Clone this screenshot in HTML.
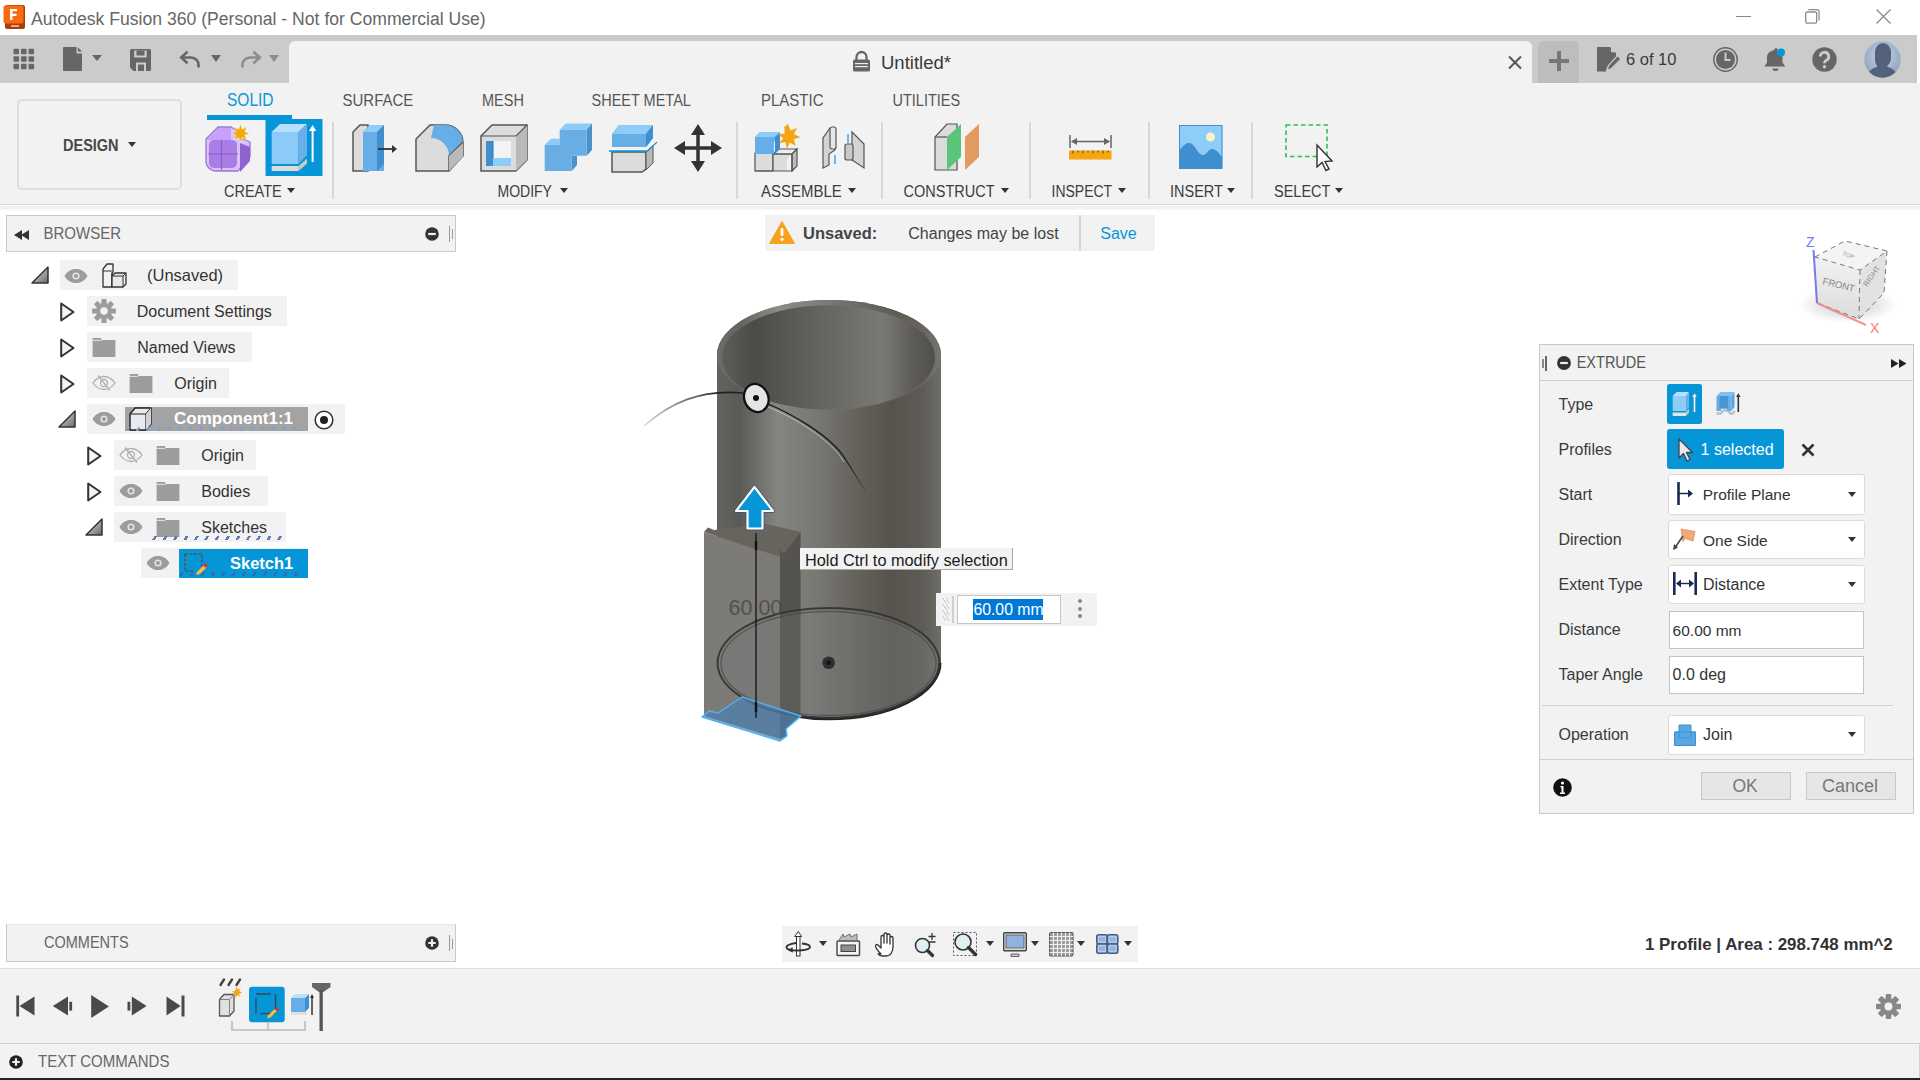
<!DOCTYPE html>
<html><head><meta charset="utf-8">
<style>
*{margin:0;padding:0;box-sizing:border-box}
html,body{width:1920px;height:1080px;overflow:hidden;background:#fff;font-family:"Liberation Sans",sans-serif;position:relative}
.a{position:absolute}
.t{position:absolute;line-height:1;white-space:nowrap;color:#3c3c3c}
svg{position:absolute;overflow:visible}
.u{transform:scaleY(1.13);transform-origin:0 0.85em}
.car{position:absolute;width:0;height:0;border-left:4px solid transparent;border-right:4px solid transparent;border-top:5px solid #333}
</style></head><body>
<!-- TITLE BAR -->
<div class="a" style="left:0;top:0;width:1920px;height:35px;background:#fff"></div>
<div class="t" style="left:31px;top:11px;font-size:17.6px;color:#666">Autodesk Fusion 360 (Personal - Not for Commercial Use)</div>
<!-- TAB STRIP -->
<div class="a" style="left:0;top:35px;width:1917px;height:48px;background:#cbcbcb"></div>
<div class="a" style="left:289px;top:41px;width:1243px;height:42px;background:#f2f2f2;border-radius:6px 6px 0 0"></div>
<div class="a" style="left:1538px;top:41px;width:41px;height:42px;background:#bdbdbd;border-radius:5px 5px 0 0"></div>
<div class="t" style="left:881px;top:54px;font-size:18.5px;color:#3a3a3a">Untitled*</div>
<div class="t" style="left:1626px;top:51px;font-size:16.5px;color:#3a3a3a">6 of 10</div>
<!-- TOOLBAR -->
<div class="a" style="left:0;top:83px;width:1920px;height:122px;background:#f2f2f2;border-bottom:1px solid #dcdcdc"></div>
<div class="a" style="left:0;top:206px;width:1920px;height:4px;background:linear-gradient(#f2f2f2 60%,#fafafa)"></div>
<div class="a" style="left:17px;top:99px;width:165px;height:91px;border:2px solid #dedede;border-radius:5px"></div>
<div class="t u" style="left:63px;top:138.5px;font-size:14.5px;font-weight:bold;color:#484848">DESIGN</div>
<div class="car" style="left:128px;top:142px"></div>
<div class="t u" style="left:227px;top:92.5px;font-size:15.5px;color:#0696d7">SOLID</div>
<div class="a" style="left:207px;top:115px;width:85px;height:5px;background:#0696d7"></div>
<div class="t u" style="left:342.5px;top:93px;font-size:15px;color:#555">SURFACE</div>
<div class="t u" style="left:482px;top:93.5px;font-size:14.5px;color:#555">MESH</div>
<div class="t u" style="left:591.5px;top:93.5px;font-size:14.5px;color:#555">SHEET METAL</div>
<div class="t u" style="left:761px;top:93px;font-size:15px;color:#555">PLASTIC</div>
<div class="t u" style="left:892.5px;top:93.5px;font-size:14.5px;color:#555">UTILITIES</div>
<div class="t u" style="left:224px;top:184.5px;font-size:14.5px">CREATE</div><div class="car" style="left:287px;top:188px"></div>
<div class="t u" style="left:497.5px;top:185px;font-size:14px">MODIFY</div><div class="car" style="left:560px;top:188px"></div>
<div class="t u" style="left:761px;top:184px;font-size:15px">ASSEMBLE</div><div class="car" style="left:848px;top:188px"></div>
<div class="t u" style="left:903.5px;top:184.5px;font-size:14.5px">CONSTRUCT</div><div class="car" style="left:1001px;top:188px"></div>
<div class="t u" style="left:1051.5px;top:185px;font-size:14px">INSPECT</div><div class="car" style="left:1118px;top:188px"></div>
<div class="t u" style="left:1170px;top:184.5px;font-size:14.5px">INSERT</div><div class="car" style="left:1227px;top:188px"></div>
<div class="t u" style="left:1274px;top:184.5px;font-size:14.5px">SELECT</div><div class="car" style="left:1335px;top:188px"></div>
<div class="a" style="left:332px;top:122px;width:2px;height:77px;background:#d8d8d8"></div>
<div class="a" style="left:736px;top:122px;width:2px;height:77px;background:#d8d8d8"></div>
<div class="a" style="left:881px;top:122px;width:2px;height:77px;background:#d8d8d8"></div>
<div class="a" style="left:1029px;top:122px;width:2px;height:77px;background:#d8d8d8"></div>
<div class="a" style="left:1148px;top:122px;width:2px;height:77px;background:#d8d8d8"></div>
<div class="a" style="left:1251px;top:122px;width:2px;height:77px;background:#d8d8d8"></div>
<!-- app logo -->
<svg style="left:3px;top:5px" width="23" height="25" viewBox="0 0 23 25">
<rect x="2" y="0" width="20" height="24" rx="2" fill="#a83d10"/>
<rect x="0.5" y="0.5" width="20" height="18" rx="2" fill="#f96a0f"/>
<path d="M7 4h7v2.3H9.5v2.4h4v2.2h-4V15H7z" fill="#fff"/>
<rect x="8" y="20" width="8" height="2" fill="#f4a07a"/>
</svg>
<!-- window controls -->
<div class="a" style="left:1736px;top:16px;width:15px;height:1px;background:#8a8a8a"></div>
<svg style="left:1805px;top:9px" width="15" height="15" viewBox="0 0 15 15"><rect x="0.7" y="3" width="11" height="11.2" rx="1.6" fill="none" stroke="#8a8a8a" stroke-width="1.3"/><path d="M3.3 0.7h8.5a2.3 2.3 0 0 1 2.3 2.3v8.4" fill="none" stroke="#8a8a8a" stroke-width="1.2"/></svg>
<svg style="left:1876px;top:9px" width="15" height="15" viewBox="0 0 15 15"><path d="M0.5 0.5L14.5 14.5M14.5 0.5L0.5 14.5" stroke="#8a8a8a" stroke-width="1.3"/></svg>
<!-- tab strip left icons -->
<svg style="left:13px;top:48px" width="23" height="22" viewBox="0 0 23 22" fill="#666">
<rect x="0.5" y="0.7" width="5.6" height="5.6" rx="1"/><rect x="8" y="0.7" width="5.6" height="5.6" rx="1"/><rect x="15.5" y="0.7" width="5.6" height="5.6" rx="1"/>
<rect x="0.5" y="8.2" width="5.6" height="5.6" rx="1"/><rect x="8" y="8.2" width="5.6" height="5.6" rx="1"/><rect x="15.5" y="8.2" width="5.6" height="5.6" rx="1"/>
<rect x="0.5" y="15.7" width="5.6" height="5.6" rx="1"/><rect x="8" y="15.7" width="5.6" height="5.6" rx="1"/><rect x="15.5" y="15.7" width="5.6" height="5.6" rx="1"/>
</svg>
<svg style="left:63px;top:47px" width="20" height="25" viewBox="0 0 20 25" fill="#666"><path d="M1 0h12.5v6.5H19V23a1 1 0 0 1-1 1H1a1 1 0 0 1-1-1V1a1 1 0 0 1 1-1z M14.8 0.3L19 4.6H14.8z"/></svg>
<div class="car" style="left:91.5px;top:55px;border-left-width:5px;border-right-width:5px;border-top:6.5px solid #666"></div>
<svg style="left:130px;top:48.5px" width="22" height="22" viewBox="0 0 22 22" fill="#666"><path d="M1.5 0h18a1.5 1.5 0 0 1 1.5 1.5v19a1.5 1.5 0 0 1-1.5 1.5H3.5L0 18.5V1.5A1.5 1.5 0 0 1 1.5 0z"/><rect x="4.2" y="1.5" width="12.5" height="7" fill="#cbcbcb"/><rect x="6.5" y="1.5" width="8" height="5" fill="#666"/><rect x="6" y="13.5" width="10" height="8.5" fill="#cbcbcb"/><rect x="8" y="15.5" width="6" height="6.5" fill="#666"/></svg>
<svg style="left:180px;top:51px" width="21" height="17" viewBox="0 0 21 17"><path d="M2 6.5h9a7.5 7.5 0 0 1 7.5 7.5v2.5" fill="none" stroke="#666" stroke-width="2.6"/><path d="M7.5 0.8L1.2 6.5L7.5 12.2" fill="none" stroke="#666" stroke-width="2.6"/></svg>
<div class="car" style="left:210.5px;top:54.5px;border-left-width:5px;border-right-width:5px;border-top:7px solid #666"></div>
<svg style="left:240px;top:51px" width="21" height="17" viewBox="0 0 21 17"><path d="M19 6.5h-9a7.5 7.5 0 0 0-7.5 7.5v2.5" fill="none" stroke="#8c8c8c" stroke-width="2.6"/><path d="M13.5 0.8L19.8 6.5L13.5 12.2" fill="none" stroke="#8c8c8c" stroke-width="2.6"/></svg>
<div class="car" style="left:268.5px;top:54.5px;border-left-width:5px;border-right-width:5px;border-top:7px solid #8c8c8c"></div>
<!-- lock -->
<svg style="left:852px;top:51px" width="19" height="21" viewBox="0 0 19 21"><path d="M4.5 9V6a5 5 0 0 1 10 0v3" fill="none" stroke="#666" stroke-width="2.3"/><rect x="1" y="8.5" width="17" height="12" rx="1.5" fill="#666"/><rect x="3" y="12" width="13" height="1.2" fill="#eee"/><rect x="3" y="15" width="13" height="1.2" fill="#eee"/></svg>
<!-- tab close -->
<svg style="left:1508px;top:55.5px" width="14" height="13" viewBox="0 0 14 13"><path d="M1 0.5L13 12.5M13 0.5L1 12.5" stroke="#555" stroke-width="2"/></svg>
<!-- plus -->
<svg style="left:1549px;top:51px" width="20" height="20" viewBox="0 0 20 20"><path d="M10 0V20M0 10H20" stroke="#777" stroke-width="4"/></svg>
<!-- doc edit -->
<svg style="left:1597px;top:47px" width="26" height="25" viewBox="0 0 26 25" fill="#666"><path d="M0 0h13l6 6v5l-9 9-1 4.5H0z"/><path d="M14 0.3l5 5h-5z" fill="#cbcbcb"/><path d="M20.5 8.5l3.5 3.5-9.5 9.5-4.5 1.5 1.5-4.5z" stroke="#cbcbcb" stroke-width="1.2"/></svg>
<!-- clock -->
<svg style="left:1712.5px;top:46.8px" width="25" height="25" viewBox="0 0 25 25"><circle cx="12.5" cy="12.5" r="11.7" fill="none" stroke="#666" stroke-width="1.5"/><circle cx="12.5" cy="12.5" r="9.5" fill="#666"/><path d="M12.5 5.5v7.5h5" fill="none" stroke="#cbcbcb" stroke-width="2"/></svg>
<!-- bell -->
<svg style="left:1764px;top:48px" width="24" height="24" viewBox="0 0 24 24"><path d="M10.5 1.5a1.5 1.5 0 0 1 3 0v1.5a6.5 6.5 0 0 1 5 6.5v5l2.7 4H0.3l2.7-4v-5a6.5 6.5 0 0 1 5-6.5z" fill="#666"/><path d="M8.5 20.5a3 2.5 0 0 0 6 0z" fill="#666"/><circle cx="17" cy="4.5" r="4" fill="#0696d7"/></svg>
<!-- help -->
<svg style="left:1811.5px;top:46.8px" width="25" height="25" viewBox="0 0 25 25"><circle cx="12.5" cy="12.5" r="12.2" fill="#666"/><path d="M8.3 9.5a4.2 4.2 0 1 1 6 3.8c-1.3.7-1.8 1.4-1.8 2.9" fill="none" stroke="#cbcbcb" stroke-width="2.8"/><circle cx="12.5" cy="19.7" r="1.7" fill="#cbcbcb"/></svg>
<!-- avatar -->
<svg style="left:1864px;top:41px" width="37" height="37" viewBox="0 0 37 37"><defs><radialGradient id="av" cx="0.5" cy="0.4" r="0.6"><stop offset="0" stop-color="#c9d4e2"/><stop offset="1" stop-color="#8da3bf"/></radialGradient><clipPath id="avc"><circle cx="18.5" cy="18.5" r="18.2"/></clipPath></defs><circle cx="18.5" cy="18.5" r="18.2" fill="url(#av)"/><g clip-path="url(#avc)" fill="#53627a"><path d="M11 11a8 9 0 0 1 16 0v6c0 3-1.5 6-3.5 7.5v1.5c4 1 9 3 10 11H3c1-8 6-10 10-11v-1.5C11 23 11 20 11 17z"/></g></svg>
<!-- TOOLBAR ICONS -->
<!-- create form -->
<svg style="left:200px;top:115px" width="130" height="65" viewBox="0 0 130 65">
<path d="M18 12h13l5 3v6l14 6v15l-12 14H16a10 10 0 0 1-10-10V24z" fill="#d9c2f9" stroke="#9c74d8" stroke-width="1.3" stroke-linejoin="round"/>
<path d="M7 25l11-12h13v12z" fill="#c7a0fa"/>
<rect x="9" y="25" width="28" height="28" rx="5" fill="#a97de6"/>
<path d="M21.5 25v30M8 39h30" stroke="#8a5cc8" stroke-width="1.2"/>
<path d="M40 28l10 4v14l-10 11z" fill="#8f62d2"/>
<path d="M40.5 9l1.7 5.2 4.9-2.4-2.4 4.9 5.2 1.7-5.2 1.7 2.4 4.9-4.9-2.4-1.7 5.2-1.7-5.2-4.9 2.4 2.4-4.9-5.2-1.7 5.2-1.7-2.4-4.9 4.9 2.4z" fill="#f5a800" stroke="#f3f3f3" stroke-width="0.6"/>
<rect x="65.5" y="4" width="57" height="57" fill="#0696d7"/>
<path d="M71.7 51h27v5h-27z" fill="#dadada"/><path d="M98.7 56l8.3-7.5v-5l-8.3 7.5z" fill="#c8c8c8"/>
<path d="M71.7 17l8.3-8h27l-8.5 8z" fill="#b6e0fc"/>
<path d="M71.7 17h26.8v32H71.7z" fill="#8ccbf8"/>
<path d="M98.5 17l8.5-8v31l-8.5 9z" fill="#68b0e6"/>
<path d="M112.6 47V12" stroke="#fff" stroke-width="2"/><path d="M109 16l3.6-6 3.6 6z" fill="#fff"/>
</svg>
<!-- press pull -->
<svg style="left:352px;top:124px" width="46" height="48" viewBox="0 0 46 48">
<path d="M1 8L8 1h8v46H1z" fill="#dcdcdc" stroke="#555" stroke-width="1.5"/>
<path d="M11 47V8l7-7h14v46z" fill="#66aee5"/><path d="M11 8l7-7h14l-7 7z" fill="#8ecdf7"/><path d="M25 8l7-7v39l-7 7z" fill="#3f8fd0"/><path d="M11 8h14v39H11z" fill="#66aee5"/>
<path d="M26 25h16" stroke="#333" stroke-width="1.8"/><path d="M40 21l5 4-5 4z" fill="#333"/>
</svg>
<!-- fillet -->
<svg style="left:415px;top:124px" width="49" height="48" viewBox="0 0 49 48">
<path d="M1 47V15L15 1h15a18 18 0 0 1 18 18v13l-14 15z" fill="#dcdcdc" stroke="#555" stroke-width="1.5"/>
<path d="M19 1h11a18 18 0 0 1 18 18v3l-14 10a18 18 0 0 0-18-18z" fill="#66aee5"/>
<path d="M34 47V32l14-14" fill="none" stroke="#555" stroke-width="1.5"/><path d="M34 32l14-13v14l-14 14z" fill="#b9b9b9"/>
</svg>
<!-- shell -->
<svg style="left:480px;top:124px" width="48" height="48" viewBox="0 0 48 48">
<path d="M1 47V12L12 1h35v35L36 47z" fill="#dcdcdc" stroke="#555" stroke-width="1.5"/>
<path d="M36 47V12l11-11v35z" fill="#b9b9b9"/><path d="M1 12h35L47 1" fill="none" stroke="#555" stroke-width="1.2"/>
<rect x="6" y="17" width="25" height="25" fill="#f3f3f3"/>
<path d="M6 17h7v17h18v8H6z" fill="#3f8fd0"/><path d="M13 34h18v8H13z" fill="#8ecdf7"/><path d="M13 17v17" stroke="#2d76b5"/>
</svg>
<!-- combine -->
<svg style="left:540px;top:118px" width="60" height="60" viewBox="0 0 60 60">
<path d="M19.7 11.7l6.1-6.1H52l-5.3 6.1z" fill="#8ccbf8"/>
<path d="M46.7 11.7L52 5.6V32l-5.3 5.8z" fill="#4893cd"/>
<path d="M4.7 26.7l6.1-5.9h8.9v5.9z" fill="#8ccbf8"/>
<path d="M31.7 37.8H37V47l-5.3 6z" fill="#4893cd"/>
<path d="M19.7 11.7h27v26.1H31.7V53h-27V26.7h15z" fill="#69ade5"/>
</svg>
<!-- split -->
<svg style="left:609px;top:124px" width="48" height="48" viewBox="0 0 48 48">
<path d="M3 45V28h34v17l-4 3H3z" fill="#dcdcdc" stroke="#555" stroke-width="1.5"/><path d="M37 28l7-6v17l-7 7z" fill="#b9b9b9" stroke="#555" stroke-width="1"/>
<path d="M3 10l7-9h34v13l-7 9H3z" fill="#66aee5"/><path d="M3 10l7-9h34l-7 9z" fill="#8ecdf7"/><path d="M37 10l7-9v13l-7 9z" fill="#3f8fd0"/>
<path d="M0 27h38l10-9" fill="none" stroke="#0696d7" stroke-width="1.3"/><path d="M0 25.5h38l10-9" fill="none" stroke="#fff" stroke-width="1"/>
</svg>
<!-- move -->
<svg style="left:674px;top:124px" width="48" height="48" viewBox="0 0 48 48" fill="#333">
<path d="M23 7v34h2V7zM7 23h34v2H7z" stroke="#333" stroke-width="1.5"/>
<path d="M24 0l-7 11h14zM24 48l-7-11h14zM0 24l11-7v14zM48 24l-11-7v14z"/>
</svg>
<!-- new component -->
<svg style="left:754px;top:124px" width="48" height="48" viewBox="0 0 48 48">
<path d="M1 47V29h23l-5 2V47z" fill="#dcdcdc" stroke="#555" stroke-width="1.2"/>
<path d="M19 47V30h19l-5 5V47z" fill="#dcdcdc"/><path d="M19 30l5-5h19l-5 5z" fill="#eee" stroke="#555" stroke-width="1.2"/><path d="M38 30l5-5v17l-5 5z" fill="#bdbdbd" stroke="#555" stroke-width="1.2"/><path d="M1 47h37V30H19M19 30v17" fill="none" stroke="#555" stroke-width="1.2"/>
<path d="M1 30V13l5-5h19v5l-5 5v12z" fill="#66aee5"/><path d="M1 13l5-5h20l-5 5z" fill="#8ecdf7"/><path d="M21 13l5-5v17l-5 5z" fill="#3f8fd0"/>
<path d="M34 0l2.5 6.5 6.5-2.5-3 6.2 6.5 3-6.7 2 2 6.8-6-3.5-3 6.2-1.3-6.7-6.8 1.5 4.6-5.2-5.5-4 6.9-0.5-0.5-6.9z" fill="#f5a511"/>
</svg>
<!-- joint -->
<svg style="left:822px;top:126px" width="43" height="43" viewBox="0 0 43 43">
<path d="M1 39V12L8 2h5v22l-6 4v11l-6 3z" fill="#d4d4d4" stroke="#555" stroke-width="1.2"/>
<rect x="8" y="1" width="6" height="22" rx="2" fill="#e6e6e6" stroke="#555" stroke-width="1.2"/>
<path d="M30 6l12 12v24L30 34z" fill="#d4d4d4" stroke="#555" stroke-width="1.2"/><rect x="23" y="18" width="8" height="16" rx="2" fill="#c9c9c9" stroke="#555" stroke-width="1.2"/>
<path d="M13 29v9M26 8v9" stroke="#1e90e0" stroke-width="1.2"/>
</svg>
<!-- construct -->
<svg style="left:934px;top:123px" width="47" height="48" viewBox="0 0 47 48">
<path d="M1 47V14L13 1h10v46z" fill="#dcdcdc" stroke="#555" stroke-width="1.2"/>
<path d="M13 47V14L27 1v33z" fill="#5bc47b"/><path d="M1 14h12" stroke="#555" stroke-width="1.2"/>
<path d="M31 47V14L45 1v33z" fill="#e29a61"/>
</svg>
<!-- measure -->
<svg style="left:1069px;top:135px" width="43" height="26" viewBox="0 0 43 26">
<path d="M1 0v13M42 0v13" stroke="#666" stroke-width="1.5"/><path d="M3 6.5h37" stroke="#666" stroke-width="1.5"/><path d="M2 6.5l6-3.5v7zM41 6.5l-6-3.5v7z" fill="#666"/>
<rect x="0" y="15.5" width="42.5" height="9" fill="#f5a511"/>
<path d="M4 15.5v3M9 15.5v2M14 15.5v3M19 15.5v2M24 15.5v3M29 15.5v2M34 15.5v3M39 15.5v2" stroke="#6a4a00" stroke-width="1"/>
</svg>
<!-- insert image -->
<svg style="left:1179px;top:125px" width="44" height="44" viewBox="0 0 44 44">
<rect x="0" y="0" width="43.5" height="43.5" fill="#8ecdf7"/>
<circle cx="31.5" cy="12" r="4.5" fill="#f7f5c8"/>
<path d="M0 26c6-8 10-10 14-6 4 4 6 10 10 10 4 0 5-6 9-6 5 0 8 6 10 8v12H0z" fill="#3f8fd0"/>
<rect x="0.5" y="0.5" width="42.5" height="42.5" fill="none" stroke="#3f8fd0" stroke-width="1"/>
</svg>
<!-- select -->
<svg style="left:1285px;top:124px" width="50" height="48" viewBox="0 0 50 48">
<rect x="1" y="1" width="41" height="31.5" fill="none" stroke="#2fbf55" stroke-width="1.6" stroke-dasharray="4.5 3"/>
<path d="M32 21v22l5-4.5 4 8 3-1.5-4-7.5 7-0.5z" fill="#fff" stroke="#333" stroke-width="1.4"/>
</svg>

<!-- BROWSER -->
<svg style="left:0;top:0;width:0;height:0"><defs>
<symbol id="eye" viewBox="0 0 24 14"><path d="M0.5 7C4 1.5 8 0 12 0s8 1.5 11.5 7C20 12.5 16 14 12 14S4 12.5 0.5 7z" fill="#9c9c9c"/><circle cx="12" cy="7" r="3.6" fill="#e4e4e4"/><circle cx="12" cy="7" r="2" fill="#9c9c9c"/></symbol>
<symbol id="eyeh" viewBox="0 0 24 16"><path d="M1 8C4.5 3 8 1.5 12 1.5S19.5 3 23 8C19.5 13 16 14.5 12 14.5S4.5 13 1 8z" fill="none" stroke="#b0b0b0" stroke-width="1.3"/><circle cx="12" cy="8" r="3.5" fill="none" stroke="#b0b0b0" stroke-width="1.3"/><path d="M6 0.5L18 15.5" stroke="#b0b0b0" stroke-width="1.3"/></symbol>
<symbol id="fold" viewBox="0 0 24 20"><path d="M0 0h9v2H0z" fill="#9c9c9c"/><path d="M0 3h8l2-1h14v18H0z" fill="#9c9c9c"/></symbol>
<symbol id="tri" viewBox="0 0 15 20"><path d="M1.2 1.5L13.5 10L1.2 18.5z" fill="#f4f4f4" stroke="#333" stroke-width="2" stroke-linejoin="round"/></symbol>
<symbol id="trif" viewBox="0 0 18 18"><defs><linearGradient id="tg" x1="0" y1="0" x2="1" y2="1"><stop offset="0" stop-color="#eee"/><stop offset="1" stop-color="#666"/></linearGradient></defs><path d="M1 17L17 1V17z" fill="url(#tg)" stroke="#333" stroke-width="1.5" stroke-linejoin="round"/></symbol>
</defs></svg>
<div class="a" style="left:6px;top:215px;width:450px;height:37px;background:#f2f2f2;border:1px solid #c9c9c9"></div>
<svg style="left:13.5px;top:230px" width="16" height="10" viewBox="0 0 16 10" fill="#333"><path d="M0 5L8 0v10zM7 5l8-5v10z"/></svg>
<div class="t u" style="left:43.5px;top:226.3px;font-size:15px;color:#666">BROWSER</div>
<svg style="left:424.5px;top:226.8px" width="14" height="14" viewBox="0 0 14 14"><circle cx="7" cy="7" r="6.8" fill="#333"/><rect x="3.2" y="5.9" width="7.6" height="2.2" fill="#f2f2f2"/></svg>
<div class="a" style="left:448.5px;top:225.5px;width:1.5px;height:16px;background:#999"></div>
<div class="a" style="left:451.5px;top:229px;width:1.5px;height:10px;background:#999"></div>

<!-- row backgrounds -->
<div class="a" style="left:60px;top:260px;width:178px;height:30px;background:#f2f2f2"></div>
<div class="a" style="left:87px;top:296px;width:200px;height:30px;background:#f2f2f2"></div>
<div class="a" style="left:87px;top:332px;width:165px;height:30px;background:#f2f2f2"></div>
<div class="a" style="left:87px;top:368px;width:142px;height:30px;background:#f2f2f2"></div>
<div class="a" style="left:87px;top:404px;width:258px;height:30px;background:#f2f2f2"></div>
<div class="a" style="left:114px;top:440px;width:142px;height:30px;background:#f2f2f2"></div>
<div class="a" style="left:114px;top:476px;width:154px;height:30px;background:#f2f2f2"></div>
<div class="a" style="left:114px;top:512px;width:172px;height:30px;background:#f2f2f2"></div>
<div class="a" style="left:141px;top:548px;width:166px;height:30px;background:#f2f2f2"></div>
<div class="a" style="left:124.5px;top:407px;width:183px;height:24px;background:#a3a3a3"></div>
<div class="a" style="left:178.5px;top:548.5px;width:129px;height:29.5px;background:#0696d7"></div>

<!-- triangles -->
<svg style="left:31px;top:266px" width="18" height="18"><use href="#trif"/></svg>
<svg style="left:60px;top:302px" width="15" height="20"><use href="#tri"/></svg>
<svg style="left:60px;top:338px" width="15" height="20"><use href="#tri"/></svg>
<svg style="left:60px;top:374px" width="15" height="20"><use href="#tri"/></svg>
<svg style="left:57.5px;top:410px" width="18" height="18"><use href="#trif"/></svg>
<svg style="left:86.5px;top:446px" width="15" height="20"><use href="#tri"/></svg>
<svg style="left:86.5px;top:482px" width="15" height="20"><use href="#tri"/></svg>
<svg style="left:84.5px;top:518px" width="18" height="18"><use href="#trif"/></svg>

<!-- eyes -->
<svg style="left:64px;top:268.5px" width="24" height="14"><use href="#eye"/></svg>
<svg style="left:91.5px;top:375px" width="24" height="16"><use href="#eyeh"/></svg>
<svg style="left:91.5px;top:412px" width="24" height="14"><use href="#eye"/></svg>
<svg style="left:118.5px;top:447px" width="24" height="16"><use href="#eyeh"/></svg>
<svg style="left:118.5px;top:484px" width="24" height="14"><use href="#eye"/></svg>
<svg style="left:118.5px;top:520px" width="24" height="14"><use href="#eye"/></svg>
<svg style="left:145.5px;top:556px" width="24" height="14"><use href="#eye"/></svg>

<!-- folders -->
<svg style="left:91.5px;top:338px" width="24" height="19"><use href="#fold"/></svg>
<svg style="left:129px;top:374px" width="24" height="19"><use href="#fold"/></svg>
<svg style="left:155.5px;top:446px" width="24" height="19"><use href="#fold"/></svg>
<svg style="left:155.5px;top:482px" width="24" height="19"><use href="#fold"/></svg>
<svg style="left:155.5px;top:518px" width="24" height="19"><use href="#fold"/></svg>

<!-- gear -->
<svg style="left:91.5px;top:299px" width="24" height="24" viewBox="0 0 24 24"><g fill="#9c9c9c" transform="translate(12 12)"><circle r="8"/><g id="gt"><rect x="-2.6" y="-12" width="5.2" height="6" rx="1"/></g><use href="#gt" transform="rotate(45)"/><use href="#gt" transform="rotate(90)"/><use href="#gt" transform="rotate(135)"/><use href="#gt" transform="rotate(180)"/><use href="#gt" transform="rotate(225)"/><use href="#gt" transform="rotate(270)"/><use href="#gt" transform="rotate(315)"/></g><circle cx="12" cy="12" r="3.8" fill="#f2f2f2"/></svg>

<!-- unsaved component icon -->
<svg style="left:102px;top:262.5px" width="25" height="25" viewBox="0 0 25 25"><path d="M1 24V6l4-5h6v8l-1 1v14z" fill="#f2f2f2" stroke="#333" stroke-width="1.3" stroke-linejoin="round"/><path d="M1 8h9M10 10v14" stroke="#333" stroke-width="1" fill="none"/><path d="M10 24V13l3-3h11v11l-3 3z" fill="#e9e9e9" stroke="#333" stroke-width="1.3" stroke-linejoin="round"/><path d="M10 13h11l3-3M21 13v11" stroke="#333" stroke-width="1" fill="none"/></svg>
<!-- component cube icon -->
<svg style="left:129px;top:407px" width="24" height="24" viewBox="0 0 24 24"><path d="M1 23V7l5-6h16v16l-5 6z" fill="#e8eaf0" stroke="#222" stroke-width="1.4" stroke-linejoin="round"/><path d="M1 7h16l5-6M17 7v16" fill="none" stroke="#222" stroke-width="1.2"/><path d="M17 7l5-6v16l-5 6z" fill="#cfd2da"/></svg>
<!-- radio -->
<svg style="left:313.5px;top:410px" width="20" height="20" viewBox="0 0 20 20"><circle cx="10" cy="10" r="8.8" fill="#fff" stroke="#333" stroke-width="1.6"/><circle cx="10" cy="10" r="4" fill="#222"/></svg>
<!-- sketch icon -->
<svg style="left:184px;top:553px" width="24" height="21" viewBox="0 0 24 21"><path d="M1 1h17v14" fill="none" stroke="#555" stroke-width="1.6" stroke-dasharray="3 1.5"/><path d="M1 1v17h8" fill="none" stroke="#555" stroke-width="1.6" stroke-dasharray="3 1.5"/><path d="M13 19l7-7 3 2-7 7-4 1z" fill="#f0c040"/><circle cx="21.5" cy="12.5" r="2" fill="#e03030"/></svg>

<!-- dashed underlines -->
<div class="a" style="left:124px;top:426.5px;width:180px;height:4px;background:repeating-linear-gradient(120deg,transparent 0 3px,#7f9fcf 3px 5.5px,transparent 5.5px 9px);opacity:.9"></div>
<div class="a" style="left:151px;top:535.5px;width:132px;height:4px;background:repeating-linear-gradient(120deg,transparent 0 3px,#5b7fb5 3px 5.5px,transparent 5.5px 9px)"></div>
<div class="a" style="left:178px;top:571.5px;width:124px;height:4px;background:repeating-linear-gradient(120deg,transparent 0 3px,#2d6fb0 3px 5.5px,transparent 5.5px 9px)"></div>

<!-- texts -->
<div class="t" style="left:147px;top:266.8px;font-size:16.5px;color:#333">(Unsaved)</div>
<div class="t" style="left:136.7px;top:303.5px;font-size:16px;color:#333">Document Settings</div>
<div class="t" style="left:137.2px;top:339.5px;font-size:16px;color:#333">Named Views</div>
<div class="t" style="left:174.2px;top:375.5px;font-size:16px;color:#333">Origin</div>
<div class="t" style="left:174px;top:410.4px;font-size:17px;color:#fff;font-weight:bold">Component1:1</div>
<div class="t" style="left:201.3px;top:447.5px;font-size:16px;color:#333">Origin</div>
<div class="t" style="left:201.3px;top:483.5px;font-size:16px;color:#333">Bodies</div>
<div class="t" style="left:201.3px;top:519.5px;font-size:16px;color:#333">Sketches</div>
<div class="t" style="left:230px;top:555px;font-size:16.5px;color:#fff;font-weight:bold">Sketch1</div>
<!-- UNSAVED BANNER -->
<div class="a" style="left:765px;top:215px;width:390px;height:35.5px;background:#f2f2f2"></div>
<div class="a" style="left:1079px;top:215px;width:2px;height:35.5px;background:#d6d6d6"></div>
<svg style="left:769px;top:221px" width="26" height="23" viewBox="0 0 26 23"><path d="M13 0.5L25.5 22.5H0.5z" fill="#f6a21e" stroke="#f6a21e" stroke-linejoin="round"/><rect x="11.6" y="7" width="2.8" height="8" rx="1" fill="#fff"/><circle cx="13" cy="18.3" r="1.6" fill="#fff"/></svg>
<div class="t" style="left:803px;top:225.2px;font-size:16.5px;font-weight:bold;color:#444">Unsaved:</div>
<div class="t" style="left:908.3px;top:225.7px;font-size:16px;color:#444">Changes may be lost</div>
<div class="t" style="left:1100.3px;top:225.7px;font-size:16px;color:#0696d7">Save</div>

<!-- 3D MODEL -->
<svg style="left:0;top:0" width="1920" height="1080" viewBox="0 0 1920 1080">
<defs>
<linearGradient id="cylo" x1="717" y1="0" x2="941" y2="0" gradientUnits="userSpaceOnUse">
<stop offset="0" stop-color="#64635e"/><stop offset="0.1" stop-color="#5b5a56"/><stop offset="0.27" stop-color="#858580"/><stop offset="0.45" stop-color="#787772"/><stop offset="0.62" stop-color="#65625c"/><stop offset="0.78" stop-color="#56524c"/><stop offset="0.92" stop-color="#5f5c57"/><stop offset="1" stop-color="#6f6d68"/>
</linearGradient>
<linearGradient id="cyli" x1="723" y1="0" x2="935" y2="0" gradientUnits="userSpaceOnUse">
<stop offset="0" stop-color="#5e5c58"/><stop offset="0.15" stop-color="#4d4b47"/><stop offset="0.4" stop-color="#605f5b"/><stop offset="0.75" stop-color="#7a7a75"/><stop offset="0.9" stop-color="#5d5b57"/><stop offset="1" stop-color="#514f4b"/>
</linearGradient>
<linearGradient id="arcg2" x1="0" y1="404" x2="0" y2="494" gradientUnits="userSpaceOnUse"><stop offset="0" stop-color="#111"/><stop offset="0.7" stop-color="#222"/><stop offset="1" stop-color="#444" stop-opacity="0.3"/></linearGradient>
<linearGradient id="arcg" x1="644" y1="0" x2="720" y2="0" gradientUnits="userSpaceOnUse"><stop offset="0" stop-color="#222" stop-opacity="0.15"/><stop offset="1" stop-color="#222"/></linearGradient>
</defs>
<!-- outer cylinder -->
<path d="M717 355 A112 55 0 0 1 941 355 V663 A112 55.5 0 0 1 717 663z" fill="url(#cylo)"/>
<ellipse cx="829" cy="355" rx="112" ry="55" fill="url(#cylo)"/><ellipse cx="829" cy="355" rx="112" ry="55" fill="#fff" fill-opacity="0.06"/>
<ellipse cx="828.6" cy="357.5" rx="106.5" ry="52.3" fill="url(#cyli)"/>
<!-- bottom sketch ellipse -->
<ellipse cx="828.5" cy="663" rx="110" ry="53.5" fill="#9aa0a0" fill-opacity="0.12"/>
<path d="M717.5 663 A111 55.5 0 0 0 940 663" fill="none" stroke="#222" stroke-width="3"/>
<!-- box -->
<path d="M704 532L708 527.5L714 530L766 524L800.6 532L784.4 553L778.8 550L780 557z" fill="#67645e"/>
<path d="M704 532L780 557V739L704 716z" fill="#7c7b76"/>
<path d="M780 557L778.8 550L784.4 553L800.6 532V715L786 729V736L780 739z" fill="#55534e"/>
<!-- sketch ellipse rings over -->
<ellipse cx="828.5" cy="663" rx="111" ry="55" fill="none" stroke="#333" stroke-width="2" stroke-opacity="0.9"/>
<ellipse cx="828.5" cy="663.5" rx="107.5" ry="52" fill="none" stroke="#3a3a3a" stroke-width="1.3" stroke-opacity="0.75"/>
<ellipse cx="828.5" cy="663" rx="109" ry="53.5" fill="#6f7878" fill-opacity="0.28"/>
<circle cx="828.6" cy="662.7" r="6.3" fill="#2e2d33"/><circle cx="828.6" cy="662.7" r="2.2" fill="#111"/>
<!-- profile -->
<path d="M702 717L709 711L718 713L742 697L801 716L786 729L787 736L780 741z" fill="#4a80b4" fill-opacity="0.68" stroke="#4fb2f2" stroke-width="1.5" stroke-linejoin="round"/>
<!-- dimension line -->
<path d="M756 533V718" stroke="#111" stroke-width="1.3"/>
<path d="M756 541V550M756 702V712" stroke="#111" stroke-width="2.4"/>
<!-- arc -->
<path d="M644 426C670 403 700 389 743 393" fill="none" stroke="url(#arcg)" stroke-width="1.6"/>
<path d="M768 404C790 413 832 436 846 460C855 474 861 484 867 494" fill="none" stroke="url(#arcg2)" stroke-width="1.3"/>
<path d="M767 406.5C790 415.5 830 438 844 462" fill="none" stroke="#e8e8e8" stroke-width="0.8" stroke-opacity="0.7"/>
<!-- handle -->
<ellipse cx="756.3" cy="398" rx="12" ry="14.3" fill="#e4e4e4" stroke="#111" stroke-width="2.3" transform="rotate(-22 756.3 398)"/>
<circle cx="756" cy="398" r="3" fill="#111"/>
<!-- arrow -->
<path d="M754.5 487L773 511H762.5V528.5H747.5V511H736z" fill="none" stroke="#3a5570" stroke-width="4.2" stroke-linejoin="round" stroke-opacity="0.8"/><path d="M754.5 487L773 511H762.5V528.5H747.5V511H736z" fill="#0696d7" stroke="#fff" stroke-width="2.2" stroke-linejoin="round"/>
</svg>
<div class="t" style="left:728.5px;top:598.3px;font-size:21.5px;color:#444;opacity:.75">60.00</div>
<!-- tooltip -->
<div class="a" style="left:800px;top:548px;width:213px;height:22px;background:#f2f2f2;border-right:1px solid #aaa;border-bottom:1px solid #aaa"></div>
<div class="t" style="left:805px;top:552px;font-size:16.3px;color:#1a1a1a">Hold Ctrl to modify selection</div>
<!-- dimension input -->
<div class="a" style="left:936px;top:593px;width:161px;height:32.5px;background:#f2f2f2"></div>
<div class="a" style="left:943px;top:598px;width:6px;height:23px;background:repeating-linear-gradient(60deg,#f2f2f2 0 2px,#cfcfcf 2px 3px)"></div>
<div class="a" style="left:952px;top:596px;width:2px;height:27px;background:#cfcfcf"></div>
<div class="a" style="left:957px;top:595px;width:104px;height:29px;background:#fff;border:1px solid #c6c6c6"></div>
<div class="a" style="left:973.4px;top:599px;width:69.5px;height:20.6px;background:#0078d7"></div>
<div class="a" style="left:973.4px;top:599px;width:69.5px;height:21px;overflow:hidden"><div class="t" style="left:0;top:3px;font-size:15.8px;color:#fff">60.00 mm</div></div>
<div class="a" style="left:1078px;top:599px;width:4px;height:4px;border-radius:2px;background:#888"></div>
<div class="a" style="left:1078px;top:606.5px;width:4px;height:4px;border-radius:2px;background:#888"></div>
<div class="a" style="left:1078px;top:614px;width:4px;height:4px;border-radius:2px;background:#888"></div>

<!-- VIEWCUBE -->
<svg style="left:1790px;top:225px" width="120" height="115" viewBox="0 0 120 115">
<defs><radialGradient id="vcs" cx="0.5" cy="0.5" r="0.5"><stop offset="0" stop-color="#000" stop-opacity="0.22"/><stop offset="1" stop-color="#000" stop-opacity="0"/></radialGradient>
<linearGradient id="vcf" x1="0" y1="0" x2="0" y2="1"><stop offset="0" stop-color="#f2f2f2"/><stop offset="1" stop-color="#dcdcdc"/></linearGradient></defs>
<ellipse cx="58" cy="80" rx="50" ry="18" fill="url(#vcs)"/>
<path d="M25 32L55 16L97 26L70 45z" fill="#f4f4f4"/>
<path d="M25 32L70 45L69 94L27 78z" fill="url(#vcf)"/>
<path d="M70 45L97 26L94 68L69 94z" fill="#e2e2e2"/>
<path d="M25 32L55 16L97 26L70 45L25 32M70 45L69 94M97 26L94 68L69 94L27 78" fill="none" stroke="#777" stroke-width="1" stroke-dasharray="5 4"/>
<path d="M23.5 25L27 78" stroke="#6060f0" stroke-width="2" stroke-opacity="0.85"/>
<path d="M27 78L76 100" stroke="#f08080" stroke-width="2" stroke-opacity="0.85"/>
<text x="16" y="22" font-family="Liberation Sans" font-size="14" fill="#7777ff">Z</text>
<text x="80" y="108" font-family="Liberation Sans" font-size="14" fill="#ff7777">X</text>
<text x="32" y="59" font-family="Liberation Sans" font-size="9.5" fill="#8a8a8a" transform="rotate(14 32 59)">FRONT</text>
<text x="77" y="62" font-family="Liberation Sans" font-size="7.5" fill="#8a8a8a" transform="rotate(-55 77 62)">RIGHT</text>
<text x="52" y="30" font-family="Liberation Sans" font-size="6" fill="#999" transform="rotate(20 52 30)">TOP</text>
</svg>
<!-- EXTRUDE PANEL -->
<div class="a" style="left:1539px;top:344px;width:375px;height:470px;background:#f2f2f2;border:1px solid #c8c8c8"></div>
<div class="a" style="left:1540px;top:380px;width:373px;height:1px;background:#cfcfcf"></div>
<div class="a" style="left:1540px;top:759px;width:373px;height:1px;background:#cfcfcf"></div>
<div class="a" style="left:1542px;top:705px;width:351px;height:1px;background:#cfcfcf"></div>
<div class="a" style="left:1542px;top:358.5px;width:1.5px;height:9px;background:#888"></div><div class="a" style="left:1545px;top:356px;width:1.5px;height:15px;background:#666"></div>
<svg style="left:1556.5px;top:355.8px" width="14" height="14" viewBox="0 0 14 14"><circle cx="7" cy="7" r="6.9" fill="#333"/><rect x="3.2" y="5.9" width="7.6" height="2.2" fill="#f2f2f2"/></svg>
<div class="t u" style="left:1576.7px;top:355.5px;font-size:14.5px;color:#555">EXTRUDE</div>
<svg style="left:1891px;top:359px" width="16" height="9" viewBox="0 0 16 9" fill="#222"><path d="M0 0l7.5 4.5L0 9zM8 0l7.5 4.5L8 9z"/></svg>
<!-- labels -->
<div class="t" style="left:1558.5px;top:396.7px;font-size:16px;color:#3a3a3a">Type</div>
<div class="t" style="left:1558.5px;top:442.4px;font-size:16px;color:#3a3a3a">Profiles</div>
<div class="t" style="left:1558.5px;top:487px;font-size:16px;color:#3a3a3a">Start</div>
<div class="t" style="left:1558.5px;top:532.4px;font-size:16px;color:#3a3a3a">Direction</div>
<div class="t" style="left:1558.5px;top:577.4px;font-size:16px;color:#3a3a3a">Extent Type</div>
<div class="t" style="left:1558.5px;top:622.4px;font-size:16px;color:#3a3a3a">Distance</div>
<div class="t" style="left:1558.5px;top:667.4px;font-size:16px;color:#3a3a3a">Taper Angle</div>
<div class="t" style="left:1558.5px;top:726.8px;font-size:16px;color:#3a3a3a">Operation</div>
<!-- type buttons -->
<div class="a" style="left:1667px;top:383.5px;width:35px;height:40.5px;background:#0696d7;border-radius:2.5px"></div>
<svg style="left:1669px;top:392px" width="30" height="26" viewBox="0 0 30 26"><path d="M3.7 20.5h13l3.3-3.5v3.5l-3.3 3.5h-13z" fill="#e4e4e4"/><path d="M16.7 24l3.3-3.5v-3.5l-3.3 3.5z" fill="#c4c4c4"/><path d="M3.7 4l3.8-4h12.5l-2.7 4z" fill="#b9e0fb"/><path d="M3.7 4h13.6v15H3.7z" fill="#8ecdf7"/><path d="M17.3 4l2.7-4v15l-2.7 4z" fill="#6ab3e8"/><path d="M25.5 20V3" stroke="#fff" stroke-width="1.6"/><path d="M23.3 5l2.2-3.7 2.2 3.7z" fill="#fff"/></svg>
<svg style="left:1715.5px;top:392px" width="26" height="25" viewBox="0 0 26 25"><path d="M0.5 21.5h4l3-3h4l3 3h2l2.5-2.5" fill="none" stroke="#bdbdbd" stroke-width="2.4"/><path d="M0.5 4l4-4h14l-3 4z" fill="#7fc0f2"/><path d="M0.5 4h15v15h-4.5v-2.5h-6v2.5H0.5z" fill="#66aee5"/><path d="M3.5 4h8.5v12.5H3.5z" fill="#4a94d0"/><path d="M15.5 4l3-4v15l-3 4z" fill="#5aa2dc"/><path d="M22.3 20V3" stroke="#333" stroke-width="1.6"/><path d="M20.1 5l2.2-3.7 2.2 3.7z" fill="#333"/></svg>
<!-- profiles selected -->
<div class="a" style="left:1667px;top:429px;width:117px;height:40px;background:#0696d7;border-radius:3px"></div>
<svg style="left:1678px;top:437.5px" width="16" height="24" viewBox="0 0 16 24"><path d="M1 1v19l4.5-4.5 3.5 7.5 3-1.5-3.5-7h6z" fill="#e8e8e8" stroke="#444" stroke-width="1.3" stroke-linejoin="round"/></svg>
<div class="t" style="left:1700.6px;top:442.4px;font-size:16px;color:#fff">1 selected</div>
<svg style="left:1801px;top:442.5px" width="14" height="14" viewBox="0 0 14 14"><path d="M1.5 1.5L12.5 12.5M12.5 1.5L1.5 12.5" stroke="#333" stroke-width="2.6"/></svg>
<!-- dropdowns -->
<div class="a" style="left:1667.5px;top:474px;width:197.5px;height:40.5px;background:#fff;border:1.5px solid #dadada;border-radius:3px"></div>
<div class="a" style="left:1667.5px;top:519.5px;width:197.5px;height:39.5px;background:#fff;border:1.5px solid #dadada;border-radius:3px"></div>
<div class="a" style="left:1667.5px;top:564.5px;width:197.5px;height:39.5px;background:#fff;border:1.5px solid #dadada;border-radius:3px"></div>
<div class="a" style="left:1668.5px;top:610.5px;width:195.5px;height:38.5px;background:#fff;border:1px solid #c4c4c4"></div>
<div class="a" style="left:1668.5px;top:655.5px;width:195.5px;height:38px;background:#fff;border:1px solid #c4c4c4"></div>
<div class="a" style="left:1667.5px;top:714.5px;width:197.5px;height:40px;background:#fff;border:1.5px solid #dadada;border-radius:3px"></div>
<div class="car" style="left:1848px;top:491.5px;border-top-color:#333"></div>
<div class="car" style="left:1848px;top:536.5px;border-top-color:#333"></div>
<div class="car" style="left:1848px;top:581.5px;border-top-color:#333"></div>
<div class="car" style="left:1848px;top:732px;border-top-color:#333"></div>
<!-- dropdown icons -->
<svg style="left:1676.5px;top:482px" width="17" height="23" viewBox="0 0 17 23"><path d="M1.5 0V23" stroke="#1a2a50" stroke-width="2.6"/><path d="M2 11.5H12" stroke="#1a2a50" stroke-width="1.5"/><path d="M16 11.5l-5-4v8z" fill="#1a2a50"/></svg>
<svg style="left:1672px;top:527.5px" width="24" height="23" viewBox="0 0 24 23"><path d="M9 1l14 2.5-2 9.5-8-2.5-2 3z" fill="#f2a97a" stroke="#e08a55" stroke-width="0.8"/><path d="M11 8L2 21" stroke="#444" stroke-width="1.5"/><path d="M1 22l1-6 4 3.5z" fill="#444"/></svg>
<svg style="left:1672.5px;top:572px" width="24" height="23" viewBox="0 0 24 23"><path d="M1.3 0V23M22.7 0V23" stroke="#1a2a50" stroke-width="2.6"/><path d="M4 11.5H20" stroke="#1a2a50" stroke-width="1.4"/><path d="M3 11.5l5-4v8zM21 11.5l-5-4v8z" fill="#1a2a50"/></svg>
<svg style="left:1674px;top:723.5px" width="22" height="22" viewBox="0 0 22 22"><path d="M5 1h12v7h4.5v13.5H0.5V8H5z" fill="#5aa8e3" stroke="#3f8fd0" stroke-width="1"/><path d="M0.5 8h21M5 8v6h12V8" fill="none" stroke="#3f8fd0" stroke-width="1"/></svg>
<!-- dropdown texts -->
<div class="t" style="left:1702.7px;top:487.3px;font-size:15.5px;color:#333">Profile Plane</div>
<div class="t" style="left:1703px;top:532.7px;font-size:15.5px;color:#333">One Side</div>
<div class="t" style="left:1703px;top:577.4px;font-size:16px;color:#333">Distance</div>
<div class="t" style="left:1672.6px;top:622.7px;font-size:15.5px;color:#333">60.00 mm</div>
<div class="t" style="left:1672.6px;top:667.4px;font-size:16px;color:#333">0.0 deg</div>
<div class="t" style="left:1703px;top:727px;font-size:16px;color:#333">Join</div>
<!-- footer -->
<svg style="left:1552.5px;top:777.5px" width="19" height="19" viewBox="0 0 19 19"><circle cx="9.5" cy="9.5" r="9.3" fill="#111"/><circle cx="9.5" cy="5" r="1.6" fill="#fff"/><path d="M7.5 8h3v6.5h1.5v1.5H7v-1.5h1.5V9.5H7.5z" fill="#fff"/></svg>
<div class="a" style="left:1701px;top:772px;width:90px;height:28px;background:#e6e6e6;border:1px solid #c8c8c8"></div>
<div class="a" style="left:1806px;top:772px;width:90px;height:28px;background:#e6e6e6;border:1px solid #c8c8c8"></div>
<div class="t" style="left:1732.5px;top:778.3px;font-size:17.5px;color:#777">OK</div>
<div class="t" style="left:1822px;top:777px;font-size:18px;color:#777">Cancel</div>
<!-- COMMENTS -->
<div class="a" style="left:6px;top:924px;width:450px;height:38px;background:#f2f2f2;border:1px solid #c9c9c9;border-top-color:#e6e6e6"></div>
<div class="t u" style="left:44px;top:936px;font-size:14.5px;color:#666">COMMENTS</div>
<svg style="left:424.5px;top:936px" width="14" height="14" viewBox="0 0 14 14"><circle cx="7" cy="7" r="6.8" fill="#333"/><path d="M3.3 7h7.4M7 3.3v7.4" stroke="#f2f2f2" stroke-width="2.1"/></svg>
<div class="a" style="left:448.5px;top:935px;width:1.5px;height:16px;background:#999"></div>
<div class="a" style="left:451.5px;top:938.5px;width:1.5px;height:10px;background:#999"></div>
<!-- NAV BAR -->
<div class="a" style="left:782px;top:926px;width:356px;height:36px;background:#f2f2f2"></div>
<svg style="left:786px;top:931px" width="26" height="26" viewBox="0 0 26 26"><path d="M12 25V5" stroke="#333" stroke-width="1"/><rect x="10.5" y="5" width="3.5" height="20" fill="#fff" stroke="#333" stroke-width="1"/><path d="M12.2 0.5l-3.5 5h7z" fill="#fff" stroke="#333" stroke-width="1"/><path d="M10 12C3 13 0 15 0.5 16.5 1 19 8 19.5 12 19.5c5 0 12-1 12-3.5 0-1.5-3-3-8-3.5" fill="none" stroke="#333" stroke-width="1.8"/><path d="M7 21.5l-5-2 4.5-3.5z" fill="#333"/></svg>
<div class="car" style="left:819px;top:941px;border-top-color:#333"></div>
<svg style="left:836px;top:932px" width="25" height="25" viewBox="0 0 25 25"><path d="M3 8l4-6 1 3 6-3 1 3 6-3v6" fill="#bbb" stroke="#555" stroke-width="0.8"/><rect x="1" y="9" width="22.5" height="14.5" rx="1" fill="#f4f4f4" stroke="#444" stroke-width="1.4"/><rect x="5" y="13" width="14.5" height="6.5" fill="#8a8f96" stroke="#444" stroke-width="1"/></svg>
<svg style="left:875px;top:932px" width="25" height="25" viewBox="0 0 25 25"><path d="M6 22c-3-3-5.5-6-5.5-8 0-1.5 1.5-2 2.5-1l3 3V5a1.5 1.5 0 0 1 3 0v6V2.5a1.5 1.5 0 0 1 3 0V11V3.5a1.5 1.5 0 0 1 3 0V12V6a1.5 1.5 0 0 1 3 0v9c0 4-2 9-7 9h-3c-2 0-4-.5-5-2z" fill="#fff" stroke="#333" stroke-width="1.3" stroke-linejoin="round"/></svg>
<svg style="left:914px;top:932px" width="25" height="25" viewBox="0 0 25 25"><circle cx="8.5" cy="13.5" r="7" fill="#dff0f3" stroke="#333" stroke-width="1.6"/><path d="M13.5 18.5l5 5" stroke="#333" stroke-width="3.2" stroke-linecap="round"/><path d="M18 1v7M14.5 4.5h7M14.5 10h7" stroke="#333" stroke-width="1.3"/></svg>
<svg style="left:953px;top:932px" width="25" height="25" viewBox="0 0 25 25"><rect x="0.5" y="0.5" width="23" height="23" fill="none" stroke="#555" stroke-width="1" stroke-dasharray="2 2"/><circle cx="10" cy="10" r="8" fill="#dff0f3" stroke="#333" stroke-width="1.6"/><path d="M15.5 15.5l7 7" stroke="#333" stroke-width="3.4" stroke-linecap="round"/></svg>
<div class="car" style="left:985.5px;top:941px;border-top-color:#333"></div>
<svg style="left:1003px;top:932px" width="24" height="25" viewBox="0 0 24 25"><rect x="0.7" y="0.7" width="22.6" height="18" rx="1" fill="#ddd" stroke="#444" stroke-width="1.4"/><rect x="3" y="3" width="18" height="13" fill="#8fb3dd" stroke="#555" stroke-width="0.8"/><path d="M8 22h8v2.5H8z" fill="#ccc" stroke="#444" stroke-width="0.8"/></svg>
<div class="car" style="left:1030.5px;top:941px;border-top-color:#333"></div>
<svg style="left:1049px;top:932px" width="25" height="25" viewBox="0 0 25 25"><rect x="0.5" y="0.5" width="23.5" height="23.5" rx="1" fill="#999" stroke="#555" stroke-width="1"/><path d="M4.5 0.5v23.5M8.5 0.5v23.5M12.5 0.5v23.5M16.5 0.5v23.5M20.5 0.5v23.5M0.5 4.5h23.5M0.5 8.5h23.5M0.5 12.5h23.5M0.5 16.5h23.5M0.5 20.5h23.5" stroke="#eee" stroke-width="1.2"/></svg>
<div class="car" style="left:1076.5px;top:941px;border-top-color:#333"></div>
<svg style="left:1095.5px;top:933.5px" width="23" height="20" viewBox="0 0 23 20"><g stroke="#455a85" stroke-width="1.6" fill="#b5cdea"><rect x="0.8" y="0.8" width="10.4" height="9.2" rx="2"/><rect x="11.4" y="0.8" width="10.4" height="9.2" rx="2"/><rect x="0.8" y="10" width="10.4" height="9.2" rx="2"/><rect x="11.4" y="10" width="10.4" height="9.2" rx="2"/></g><g fill="#94b3dc"><rect x="3" y="3.2" width="6" height="4.4"/><rect x="13.6" y="3.2" width="6" height="4.4"/><rect x="3" y="12.4" width="6" height="4.4"/><rect x="13.6" y="12.4" width="6" height="4.4"/></g></svg>
<div class="car" style="left:1124px;top:941px;border-top-color:#333"></div>
<!-- status -->
<div class="t" style="left:1645px;top:936.5px;font-size:16.9px;font-weight:bold;color:#333">1 Profile | Area : 298.748 mm^2</div>
<!-- TIMELINE -->
<div class="a" style="left:0;top:968px;width:1920px;height:76px;background:#f2f2f2;border-top:1.5px solid #dedede"></div>
<svg style="left:16px;top:995px" width="170" height="24" viewBox="0 0 170 24" fill="#4a4a4a">
<rect x="0.3" y="0.5" width="2.8" height="21"/><path d="M3.5 11L18.5 1.5v19z"/>
<path d="M36.8 11L52 1.5v19z"/><rect x="53.3" y="6.8" width="2.8" height="8.8"/>
<path d="M75.2 0v23l17.7-11.5z"/>
<rect x="111.5" y="6.8" width="2.8" height="8.8"/><path d="M115.8 1.5v19L130.6 11z"/>
<path d="M150.5 1.5v19L164.6 11z"/><rect x="165.5" y="0.5" width="3" height="21"/>
</svg>
<svg style="left:218px;top:978px" width="115" height="55" viewBox="0 0 115 55">
<path d="M2.5 7l3.5-5.5M10.5 7l3.5-5.5M18.5 7l3.5-5.5" stroke="#444" stroke-width="2.4" stroke-linecap="round"/>
<path d="M1.5 38V21.5l4.5-5h10v16.5l-4.5 5z" fill="#e0e0e0" stroke="#555" stroke-width="1.3" stroke-linejoin="round"/><path d="M1.5 21.5h10l4.5-5M11.5 21.5V38" fill="none" stroke="#777" stroke-width="0.9"/>
<path d="M18.5 8.5l1.2 3 3-1-1.5 2.7 3 1.5-3 .8.8 3-2.7-1.5-1.5 3-.5-3-3 .8 2.2-2.3-2.3-2.2 3-.2z" fill="#f5a511"/>
<rect x="31" y="8.7" width="35.7" height="35.5" rx="3" fill="#0696d7"/>
<path d="M38 16h19.5v19.5H38z" fill="none" stroke="#3a4a5a" stroke-width="1.5" stroke-dasharray="15 4.5"/>
<path d="M50 37.5l6.5-6.5 2.5 2-6.5 6.5-3.5 1z" fill="#f0c040"/><circle cx="59" cy="31" r="1.8" fill="#e03030"/>
<path d="M73 34h16v3H73z" fill="#e0e0e0"/><path d="M73 20l4-4h14l-4 4z" fill="#b9e0fb"/><path d="M73 20h14v14H73z" fill="#66aee5"/><path d="M87 20l4-4v14l-4 4z" fill="#3f8fd0"/>
<path d="M94 37V18" stroke="#333" stroke-width="1.5"/><path d="M92 20l2-4 2 4z" fill="#333"/>
<path d="M94 5h18.5v4l-7 5h-4.5l-7-5z" fill="#666"/><rect x="101.5" y="12" width="3.3" height="41" fill="#555"/>
<path d="M14 43v9h73v-9M50 44v8" fill="none" stroke="#c8c8c8" stroke-width="2.2"/>
</svg>
<svg style="left:1876px;top:994px" width="25" height="25" viewBox="0 0 24 24"><g fill="#888" transform="translate(12 12)"><circle r="8.2"/><rect x="-2.7" y="-12" width="5.4" height="6" rx="1"/><rect x="-2.7" y="-12" width="5.4" height="6" rx="1" transform="rotate(45)"/><rect x="-2.7" y="-12" width="5.4" height="6" rx="1" transform="rotate(90)"/><rect x="-2.7" y="-12" width="5.4" height="6" rx="1" transform="rotate(135)"/><rect x="-2.7" y="-12" width="5.4" height="6" rx="1" transform="rotate(180)"/><rect x="-2.7" y="-12" width="5.4" height="6" rx="1" transform="rotate(225)"/><rect x="-2.7" y="-12" width="5.4" height="6" rx="1" transform="rotate(270)"/><rect x="-2.7" y="-12" width="5.4" height="6" rx="1" transform="rotate(315)"/></g><circle cx="12" cy="12" r="3.8" fill="#f2f2f2"/></svg>
<!-- TEXT COMMANDS -->
<div class="a" style="left:0;top:1043px;width:1920px;height:35px;background:#f2f2f2;border-top:1.5px solid #d0d0d0;border-right:1.5px solid #d0d0d0"></div>
<div class="a" style="left:0;top:1078px;width:1920px;height:2px;background:#222"></div>
<svg style="left:9px;top:1055px" width="14" height="14" viewBox="0 0 14 14"><circle cx="7" cy="7" r="6.8" fill="#222"/><path d="M3.3 7h7.4M7 3.3v7.4" stroke="#f2f2f2" stroke-width="2.1"/></svg>
<div class="t u" style="left:38px;top:1054.3px;font-size:15px;color:#666">TEXT COMMANDS</div>
</body></html>
